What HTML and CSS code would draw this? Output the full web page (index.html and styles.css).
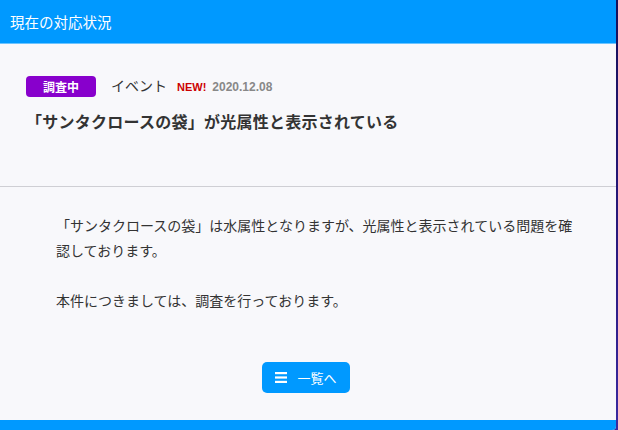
FILE: index.html
```html
<!DOCTYPE html>
<html lang="ja">
<head>
<meta charset="utf-8">
<link rel="stylesheet" href="styles.css">
</head>
<body>
<div class="card">
  <header class="card-header">現在の対応状況</header>
  <section class="summary">
    <div class="meta">
      <span class="badge">調査中</span>
      <span class="category">イベント</span>
      <span class="new">NEW!</span>
      <span class="date">2020.12.08</span>
    </div>
    <h1 class="title">「サンタクロースの袋」が光属性と表示されている</h1>
  </section>
  <section class="detail">
    <p>「サンタクロースの袋」は水属性となりますが、光属性と表示されている問題を確認しております。</p>
    <p>本件につきましては、調査を行っております。</p>
  </section>
  <div class="actions">
    <a class="btn" href="#">
      <svg class="btn-icon" width="12" height="11" viewBox="0 0 12 11"><rect x="0" y="0" width="12" height="2.2" fill="#fff"/><rect x="0" y="4.4" width="12" height="2.2" fill="#fff"/><rect x="0" y="8.8" width="12" height="2.2" fill="#fff"/></svg>
      <span>一覧へ</span>
    </a>
  </div>
  <footer class="card-footer"></footer>
</div>
</body>
</html>
```
FILE: styles.css
```css
html, body {
  margin: 0;
  padding: 0;
  height: 100%;
}
body {
  background: linear-gradient(180deg, #16105a 0%, #2a1a80 60%, #3a2aa0 100%);
  font-family: "Noto Sans CJK JP", "Noto Sans", sans-serif;
  color: #333;
  overflow: hidden;
}
.card {
  width: 616px;
  height: 430px;
  background: #f8f8fb;
  display: flex;
  flex-direction: column;
  border-bottom-right-radius: 4px;
  overflow: hidden;
}
.card-header {
  height: 44px;
  box-sizing: border-box;
  background: #0099ff;
  border-bottom: 1px solid #6cc4ff;
  color: #fff;
  font-size: 14.5px;
  line-height: 44px;
  padding-left: 10px;
}
.summary {
  padding: 32px 26px 0 26px;
  height: 143px;
  box-sizing: border-box;
  border-bottom: 1px solid #cfcfd4;
}
.meta {
  display: flex;
  align-items: center;
  height: 21px;
}
.badge {
  width: 70px;
  height: 21px;
  background: #8800cc;
  color: #fff;
  border-radius: 4px;
  font-size: 12px;
  font-weight: bold;
  display: flex;
  align-items: center;
  justify-content: center;
}
.category {
  margin-left: 15px;
  font-size: 14px;
  color: #333;
  margin-top: -4px;
}
.new {
  margin-left: 10px;
  font-family: "Liberation Sans", Arial, sans-serif;
  font-weight: bold;
  font-size: 11px;
  color: #cc0000;
}
.date {
  margin-left: 6px;
  font-family: "Liberation Sans", Arial, sans-serif;
  font-weight: bold;
  font-size: 12px;
  color: #888;
}
.title {
  margin: 11px 0 0 0;
  font-size: 16px;
  letter-spacing: 0.25px;
  font-weight: bold;
  line-height: 26px;
  color: #333;
}
.detail {
  padding: 26px 40px 0 56px;
  font-size: 14px;
  line-height: 25px;
}
.detail p {
  margin: 0 0 25px 0;
}
.actions {
  display: flex;
  justify-content: center;
  padding-top: 24px;
  padding-right: 4px;
}
.btn {
  width: 88px;
  height: 31px;
  box-sizing: border-box;
  background: #0099ff;
  border-radius: 5px;
  color: #fff;
  text-decoration: none;
  font-size: 13px;
  display: flex;
  align-items: center;
  justify-content: center;
  gap: 10px;
}
.btn-icon {
  display: block;
}
.card-footer {
  margin-top: auto;
  height: 10px;
  background: #0099ff;
}
```
